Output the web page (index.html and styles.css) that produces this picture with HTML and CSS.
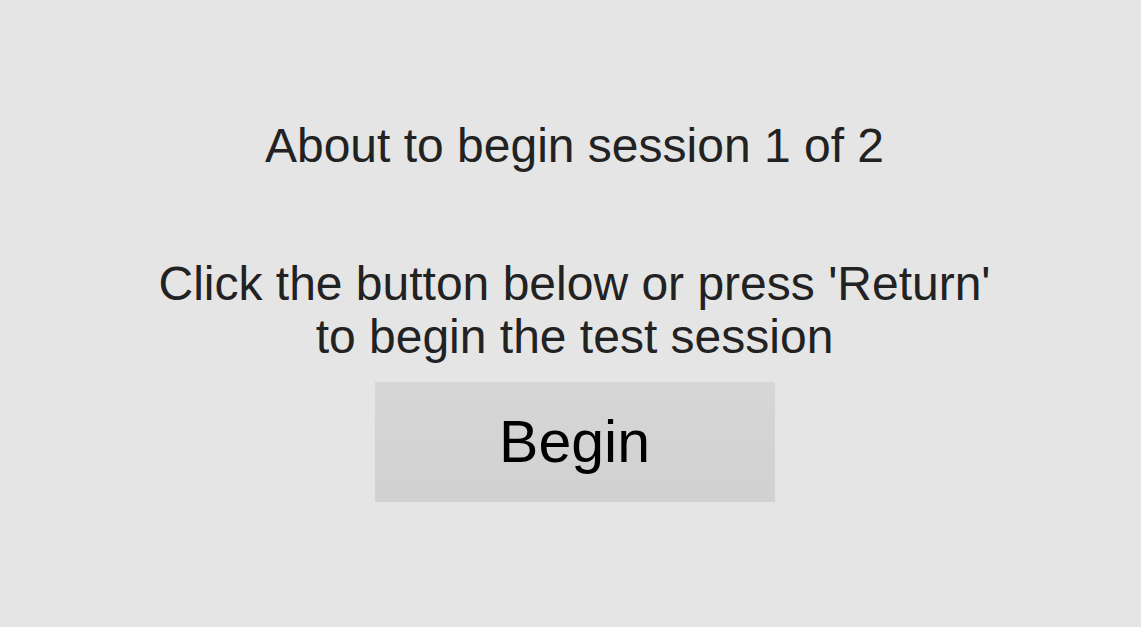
FILE: index.html
```html
<!DOCTYPE html>
<html lang="en">
<head>
<meta charset="utf-8">
<title>Session</title>
<link rel="stylesheet" href="styles.css">
</head>
<body>
<main class="screen">
  <h1 class="title">About to begin session 1 of 2</h1>
  <p class="instructions">Click the button below or press 'Return'<br>to begin the test session</p>
  <button class="begin" type="button">Begin</button>
</main>
</body>
</html>
```

FILE: styles.css
```css
html, body {
  margin: 0;
  padding: 0;
  background: #e5e5e5;
}
.screen {
  box-sizing: border-box;
  width: 1141px;
  height: 627px;
  padding: 119px 0 0 8px;
  display: flex;
  flex-direction: column;
  align-items: center;
  font-family: "Liberation Sans", Arial, sans-serif;
  color: #222222;
}
.title {
  margin: 0;
  font-size: 48px;
  font-weight: normal;
  line-height: 53px;
}
.instructions {
  margin: 85px 0 0 0;
  font-size: 48px;
  line-height: 53px;
  text-align: center;
}
.begin {
  margin-top: 19px;
  width: 400px;
  height: 120px;
  border: none;
  padding: 0;
  background: linear-gradient(#d6d6d6, #d1d1d1);
  font-family: "Liberation Sans", Arial, sans-serif;
  font-size: 59px;
  color: #000000;
  display: flex;
  align-items: center;
  justify-content: center;
}
```
